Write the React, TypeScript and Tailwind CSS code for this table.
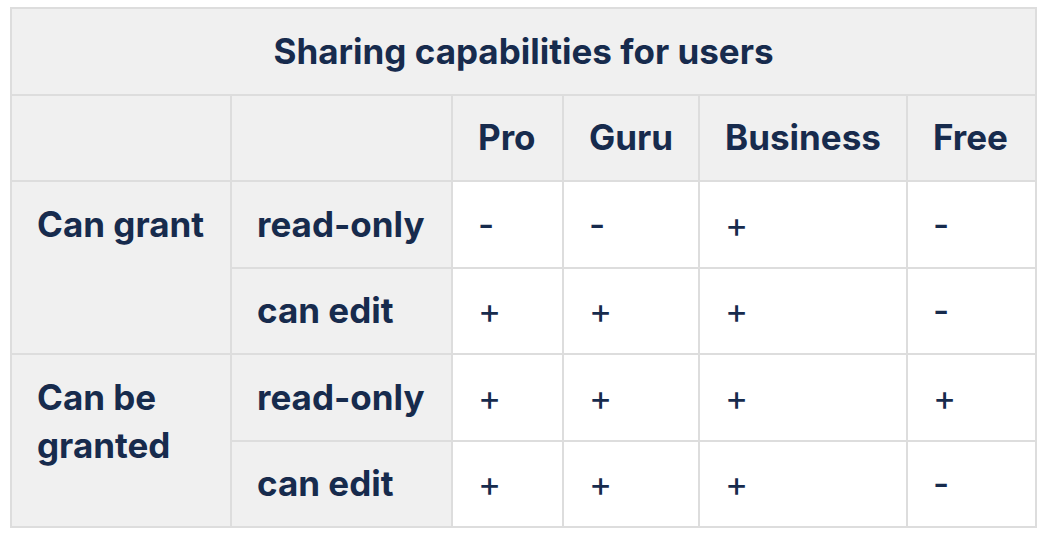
import React from "react";

const th = "border-2 border-[#dddddd] bg-[#f0f0f0] px-[25px] pt-[17.5px] pb-[19px] text-left align-top font-bold";
const td = "border-2 border-[#dddddd] bg-white px-[25px] pt-[17.5px] pb-[19px] text-left align-top font-normal";

type Row = { group?: string; span?: number; kind: string; vals: string[] };

const rows: Row[] = [
  { group: "Can grant", span: 2, kind: "read-only", vals: ["-", "-", "+", "-"] },
  { kind: "can edit", vals: ["+", "+", "+", "-"] },
  { group: "Can be granted", span: 2, kind: "read-only", vals: ["+", "+", "+", "+"] },
  { kind: "can edit", vals: ["+", "+", "+", "-"] },
];

export default function App() {
  return (
    <div className="w-[1048px] h-[538px] bg-white pt-[7px] pl-[10px]">
      <table
        className="table-fixed border-collapse w-[1025px] text-[#172b4d] text-[35px] leading-[48px]"
        style={{ fontFamily: "Inter, 'Noto Sans', sans-serif" }}
      >
        <colgroup>
          <col className="w-[220px]" />
          <col className="w-[221px]" />
          <col className="w-[111px]" />
          <col className="w-[136px]" />
          <col className="w-[208px]" />
          <col className="w-[129px]" />
        </colgroup>
        <tbody>
          <tr>
            <th colSpan={6} className={th + " text-center"}>
              <span className="block text-center">Sharing capabilities for users</span>
            </th>
          </tr>
          <tr>
            <th className={th}></th>
            <th className={th}></th>
            <th className={th}>Pro</th>
            <th className={th}>Guru</th>
            <th className={th}>Business</th>
            <th className={th}>Free</th>
          </tr>
          {rows.map((r, i) => (
            <tr key={i}>
              {r.group && (
                <th rowSpan={r.span} className={th}>
                  {r.group}
                </th>
              )}
              <th className={th}>{r.kind}</th>
              {r.vals.map((v, j) => (
                <td key={j} className={td}>
                  {v === "-" ? <span className="font-medium">-</span> : v}
                </td>
              ))}
            </tr>
          ))}
        </tbody>
      </table>
    </div>
  );
}
